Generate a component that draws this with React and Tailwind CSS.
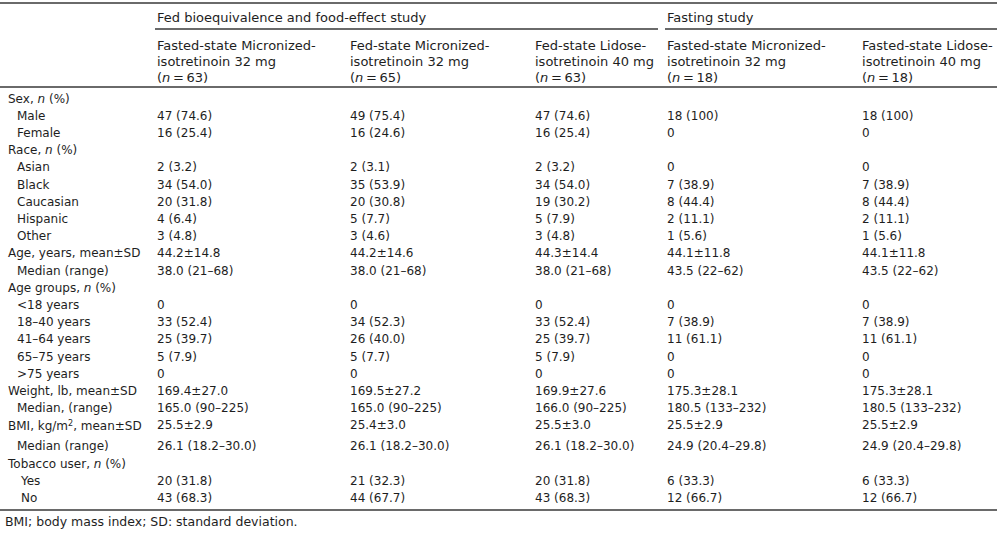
import React from 'react';

const rows = [
  { label: <>Sex, <i>n</i> (%)</>, lvl: 0, v: [] },
  { label: 'Male', lvl: 1, v: ['47 (74.6)', '49 (75.4)', '47 (74.6)', '18 (100)', '18 (100)'] },
  { label: 'Female', lvl: 1, v: ['16 (25.4)', '16 (24.6)', '16 (25.4)', '0', '0'] },
  { label: <>Race, <i>n</i> (%)</>, lvl: 0, v: [] },
  { label: 'Asian', lvl: 1, v: ['2 (3.2)', '2 (3.1)', '2 (3.2)', '0', '0'] },
  { label: 'Black', lvl: 1, v: ['34 (54.0)', '35 (53.9)', '34 (54.0)', '7 (38.9)', '7 (38.9)'] },
  { label: 'Caucasian', lvl: 1, v: ['20 (31.8)', '20 (30.8)', '19 (30.2)', '8 (44.4)', '8 (44.4)'] },
  { label: 'Hispanic', lvl: 1, v: ['4 (6.4)', '5 (7.7)', '5 (7.9)', '2 (11.1)', '2 (11.1)'] },
  { label: 'Other', lvl: 1, v: ['3 (4.8)', '3 (4.6)', '3 (4.8)', '1 (5.6)', '1 (5.6)'] },
  { label: 'Age, years, mean±SD', lvl: 0, v: ['44.2±14.8', '44.2±14.6', '44.3±14.4', '44.1±11.8', '44.1±11.8'] },
  { label: 'Median (range)', lvl: 1, v: ['38.0 (21–68)', '38.0 (21–68)', '38.0 (21–68)', '43.5 (22–62)', '43.5 (22–62)'] },
  { label: <>Age groups, <i>n</i> (%)</>, lvl: 0, v: [] },
  { label: '<18 years', lvl: 1, v: ['0', '0', '0', '0', '0'] },
  { label: '18–40 years', lvl: 1, v: ['33 (52.4)', '34 (52.3)', '33 (52.4)', '7 (38.9)', '7 (38.9)'] },
  { label: '41–64 years', lvl: 1, v: ['25 (39.7)', '26 (40.0)', '25 (39.7)', '11 (61.1)', '11 (61.1)'] },
  { label: '65–75 years', lvl: 1, v: ['5 (7.9)', '5 (7.7)', '5 (7.9)', '0', '0'] },
  { label: '>75 years', lvl: 1, v: ['0', '0', '0', '0', '0'] },
  { label: 'Weight, lb, mean±SD', lvl: 0, v: ['169.4±27.0', '169.5±27.2', '169.9±27.6', '175.3±28.1', '175.3±28.1'] },
  { label: 'Median, (range)', lvl: 1, v: ['165.0 (90–225)', '165.0 (90–225)', '166.0 (90–225)', '180.5 (133–232)', '180.5 (133–232)'] },
  { label: <>BMI, kg/m<sup className="text-[8px] leading-none">2</sup>, mean±SD</>, lvl: 0, tall: true, v: ['25.5±2.9', '25.4±3.0', '25.5±3.0', '25.5±2.9', '25.5±2.9'] },
  { label: 'Median (range)', lvl: 1, v: ['26.1 (18.2–30.0)', '26.1 (18.2–30.0)', '26.1 (18.2–30.0)', '24.9 (20.4–29.8)', '24.9 (20.4–29.8)'] },
  { label: <>Tobacco user, <i>n</i> (%)</>, lvl: 0, v: [] },
  { label: 'Yes', lvl: 2, v: ['20 (31.8)', '21 (32.3)', '20 (31.8)', '6 (33.3)', '6 (33.3)'] },
  { label: 'No', lvl: 2, v: ['43 (68.3)', '44 (67.7)', '43 (68.3)', '12 (66.7)', '12 (66.7)'] },
];

const heads = [
  ['Fasted-state Micronized-', 'isotretinoin 32 mg', '63'],
  ['Fed-state Micronized-', 'isotretinoin 32 mg', '65'],
  ['Fed-state Lidose-', 'isotretinoin 40 mg', '63'],
  ['Fasted-state Micronized-', 'isotretinoin 32 mg', '18'],
  ['Fasted-state Lidose-', 'isotretinoin 40 mg', '18'],
];

const indent = ['pl-[8px]', 'pl-[17px]', 'pl-[21px]'];

export default function App() {
  return (
    <div className="h-[534px] w-[1000px] overflow-hidden bg-white pt-[2px] font-['DejaVu_Sans',sans-serif] text-[12px] text-[#1e1e1e]">
      <table className="w-[997px] table-fixed border-collapse">
        <colgroup>
          <col className="w-[153px]" />
          <col className="w-[193px]" />
          <col className="w-[185px]" />
          <col className="w-[132px]" />
          <col className="w-[195px]" />
          <col className="w-[139px]" />
        </colgroup>
        <thead className="text-[13px]">
          <tr className="border-t-2 border-[#6a6a6a]">
            <td />
            <td colSpan={3} className="p-0 pt-[6px] align-top">
              <div className="ml-[2px] mr-[5px] border-b-2 border-[#6a6a6a] pb-[2px] pl-[2px] leading-[16px]">
                Fed bioequivalence and food-effect study
              </div>
            </td>
            <td colSpan={2} className="p-0 pt-[6px] align-top">
              <div className="ml-[2px] border-b-2 border-[#6a6a6a] pb-[2px] pl-[2px] leading-[16px]">
                Fasting study
              </div>
            </td>
          </tr>
          <tr className="border-b-2 border-[#6a6a6a]">
            <td />
            {heads.map((h, i) => (
              <td key={i} className="whitespace-nowrap p-0 pl-[4px] pt-[8px] align-top leading-[16px]">
                {h[0]}
                <br />
                {h[1]}
                <br />(<i>n</i>{'\u2009=\u2009'}{h[2]})
              </td>
            ))}
          </tr>
        </thead>
        <tbody>
          <tr className="h-[3.5px]">
            <td colSpan={6} className="p-0" />
          </tr>
          {rows.map((r, i) => (
            <tr key={i} className={r.tall ? 'h-[21px]' : 'h-[17.2px]'}>
              <td className={`whitespace-nowrap p-0 align-top leading-[17.2px] ${indent[r.lvl]} ${r.tall ? 'pt-[1px]' : ''}`}>
                {r.label}
              </td>
              {[0, 1, 2, 3, 4].map((k) => (
                <td key={k} className="whitespace-nowrap p-0 pl-[4px] align-top leading-[17.2px]">
                  {r.v[k] || ''}
                </td>
              ))}
            </tr>
          ))}
          <tr className="h-[3px] border-b-2 border-[#6a6a6a]">
            <td colSpan={6} className="p-0" />
          </tr>
        </tbody>
      </table>
      <p className="mt-[3px] pl-[5px] text-[12.5px] leading-[16px]">BMI; body mass index; SD: standard deviation.</p>
    </div>
  );
}
